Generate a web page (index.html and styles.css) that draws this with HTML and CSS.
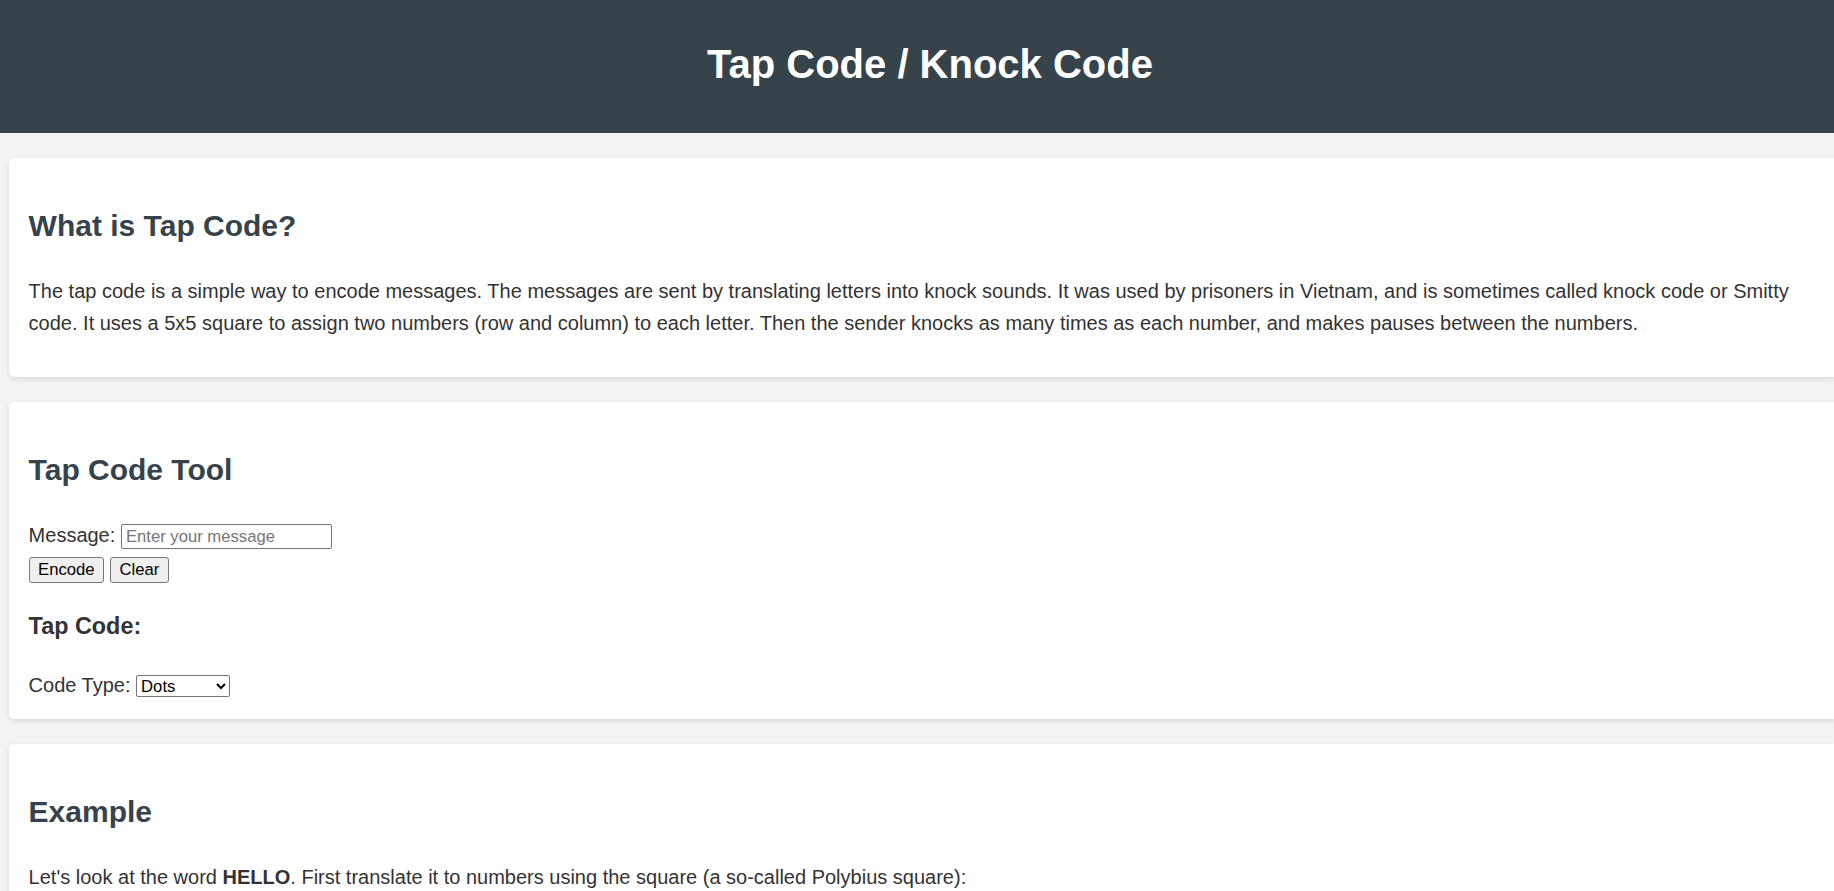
FILE: index.html
```html
<!DOCTYPE html>
<html lang="en">
<head>
<meta charset="utf-8">
<title>Tap Code / Knock Code</title>
<link rel="stylesheet" href="styles.css">
</head>
<body>
<header class="site-header">
  <h1 class="site-title">Tap Code / Knock Code</h1>
</header>
<main class="main">
  <section class="card">
    <h2 class="card-title">What is Tap Code?</h2>
    <p class="text">The tap code is a simple way to encode messages. The messages are sent by translating letters into knock sounds. It was used by prisoners in Vietnam, and is sometimes called knock code or Smitty code. It uses a 5x5 square to assign two numbers (row and column) to each letter. Then the sender knocks as many times as each number, and makes pauses between the numbers.</p>
  </section>
  <section class="card">
    <h2 class="card-title">Tap Code Tool</h2>
    <div class="form-block">
      <label class="label" for="msg">Message:</label> <input id="msg" class="msg-input" type="text" placeholder="Enter your message"><br>
      <span class="btn-row"><button class="btn" type="button">Encode</button><button class="btn" type="button">Clear</button></span>
    </div>
    <h3 class="sub-title">Tap Code:</h3>
    <div class="type-row">
      <label class="label" for="type">Code Type:</label> <select id="type" class="type-select"><option>Dots</option><option>Numbers</option></select>
    </div>
  </section>
  <section class="card">
    <h2 class="card-title">Example</h2>
    <p class="text">Let's look at the word <strong>HELLO</strong>. First translate it to numbers using the square (a so-called Polybius square):</p>
  </section>
</main>
</body>
</html>
```

FILE: styles.css
```css
html, body {
  margin: 0;
  padding: 0;
}
body {
  background: #f3f3f3;
  color: #333333;
  font-family: "Liberation Sans", Arial, sans-serif;
  font-size: 20px;
  line-height: 1.6;
  overflow-x: hidden;
}
.site-header {
  background: #37434b;
  color: #ffffff;
  padding: 41px 13px 46px;
  width: 100%;
}
.site-title {
  margin: 0;
  font-size: 40px;
  line-height: 46px;
  font-weight: bold;
  text-align: center;
}
.main {
  padding-top: 25px;
}
.card {
  background: #ffffff;
  margin: 0 -5px 25px 9px;
  padding: 18.75px 19.6px;
  border-radius: 5px;
  box-shadow: 0 2px 5px rgba(0, 0, 0, 0.1);
}
.card-title {
  color: #37434b;
  font-size: 30px;
  margin: 24.9px 0;
}
.text {
  margin: 20px 0;
}
.label {
  color: #333333;
}
.form-block {
  padding-bottom: 1.5px;
}
.msg-input {
  box-sizing: border-box;
  width: 211px;
  height: 25px;
  font-family: "Liberation Sans", Arial, sans-serif;
  font-size: 16.67px;
  padding: 1px 4px;
  border: 1px solid #767676;
  border-radius: 2px;
  color: #000;
  vertical-align: baseline;
}
.msg-input::placeholder {
  color: #757575;
}
.btn-row {
  display: inline-flex;
  gap: 6px;
  vertical-align: -1px;
}
.btn {
  box-sizing: border-box;
  height: 26px;
  padding: 0 8.5px;
  font-family: "Liberation Sans", Arial, sans-serif;
  font-size: 16.67px;
  color: #000;
  background: #efefef;
  border: 1px solid #767676;
  border-radius: 3px;
}
.sub-title {
  font-size: 23.4px;
  margin: 23.4px 0;
  color: #333333;
}
.type-select {
  box-sizing: border-box;
  width: 94px;
  height: 22px;
  font-family: "Liberation Sans", Arial, sans-serif;
  font-size: 16.67px;
  color: #000;
  background: #fff;
  border: 1px solid #767676;
  border-radius: 2px;
}
```
